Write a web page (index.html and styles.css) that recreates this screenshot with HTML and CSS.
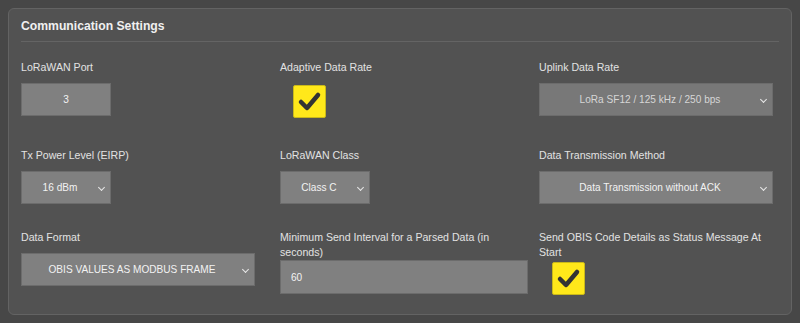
FILE: index.html
```html
<!DOCTYPE html>
<html>
<head>
<meta charset="utf-8">
<link rel="stylesheet" href="styles.css">
</head>
<body>
<section class="card">
  <h2 class="title">Communication Settings</h2>
  <div class="grid">
    <div class="field">
      <label class="label">LoRaWAN Port</label>
      <div class="ctrl input small center">3</div>
    </div>
    <div class="field">
      <label class="label">Adaptive Data Rate</label>
      <div class="check ck1"><svg viewBox="0 0 33 33" width="33" height="33"><path d="M8 17 L14 23 L25 10" fill="none" stroke="#333" stroke-width="4.5" stroke-linecap="round" stroke-linejoin="round"/></svg></div>
    </div>
    <div class="field">
      <label class="label">Uplink Data Rate</label>
      <div class="ctrl select wide disabled"><span>LoRa SF12 / 125 kHz / 250 bps</span><i class="chev"></i></div>
    </div>

    <div class="field">
      <label class="label">Tx Power Level (EIRP)</label>
      <div class="ctrl select small"><span>16 dBm</span><i class="chev"></i></div>
    </div>
    <div class="field">
      <label class="label">LoRaWAN Class</label>
      <div class="ctrl select small"><span>Class C</span><i class="chev"></i></div>
    </div>
    <div class="field">
      <label class="label">Data Transmission Method</label>
      <div class="ctrl select wide"><span>Data Transmission without ACK</span><i class="chev"></i></div>
    </div>

    <div class="field">
      <label class="label">Data Format</label>
      <div class="ctrl select wide"><span>OBIS VALUES AS MODBUS FRAME</span><i class="chev"></i></div>
    </div>
    <div class="field">
      <label class="label tight">Minimum Send Interval for a Parsed Data (in seconds)</label>
      <div class="ctrl input long">60</div>
    </div>
    <div class="field">
      <label class="label tight">Send OBIS Code Details as Status Message At Start</label>
      <div class="check ck2"><svg viewBox="0 0 33 33" width="33" height="33"><path d="M8 17 L14 23 L25 10" fill="none" stroke="#333" stroke-width="4.5" stroke-linecap="round" stroke-linejoin="round"/></svg></div>
    </div>
  </div>
</section>
</body>
</html>
```
FILE: styles.css
```css
html, body {
  margin: 0;
  padding: 0;
}
body {
  background: #474747;
  font-family: "Liberation Sans", Arial, sans-serif;
  color: #e6e6e6;
  padding: 8px 8px 8px 8px;
  height: 323px;
  box-sizing: border-box;
}
.card {
  background: #525252;
  border: 1px solid #636363;
  border-radius: 6px;
  height: 307px;
  box-sizing: border-box;
  padding: 0 12px 0 12px;
}
.title {
  margin: 0;
  font-size: 12.2px;
  font-weight: bold;
  color: #f0f0f0;
  padding: 10px 0 0 0;
  height: 33px;
  box-sizing: border-box;
  border-bottom: 1px solid #646464;
  line-height: 14px;
}
.grid {
  display: grid;
  grid-template-columns: 259px 259px 1fr;
  grid-auto-rows: auto;
  padding-top: 18px;
}
.field {
  display: flex;
  flex-direction: column;
  align-items: flex-start;
  height: 88px;
}
.field:nth-child(n+4) { height: 82px; }
.label {
  font-size: 10.6px;
  line-height: 15px;
  color: #e2e2e2;
  margin-bottom: 8px;
  padding-right: 6px;
}
.label.tight { margin-bottom: 0; }
.ctrl {
  height: 33px;
  box-sizing: border-box;
  background: #808080;
  border: 1px solid #6c6c6c;
  color: #f2f2f2;
  font-size: 10.1px;
  display: flex;
  align-items: center;
  position: relative;
}
.small { width: 90px; }
.wide { width: 234px; }
.long { width: 248px; height: 34px; padding-left: 10px; }
.center { justify-content: center; }
.select { justify-content: center; padding-right: 12px; }
.select span { display: block; }
.disabled { background: #787878; color: #d6d6d6; }
.chev {
  position: absolute;
  right: 6px;
  top: 13px;
  width: 4px;
  height: 4px;
  border-right: 1.3px solid #e8e8e8;
  border-bottom: 1.3px solid #e8e8e8;
  transform: rotate(45deg);
}
.check {
  width: 33px;
  height: 33px;
  box-sizing: border-box;
  background: #ffe81a;
  border: 1px solid #c9b81a;
  border-radius: 2px;
}
.check svg { display: block; margin: -1px; }
.ck1 { margin-left: 13px; margin-top: 2px; }
.ck2 { margin-left: 13px; margin-top: 2px; }
```
